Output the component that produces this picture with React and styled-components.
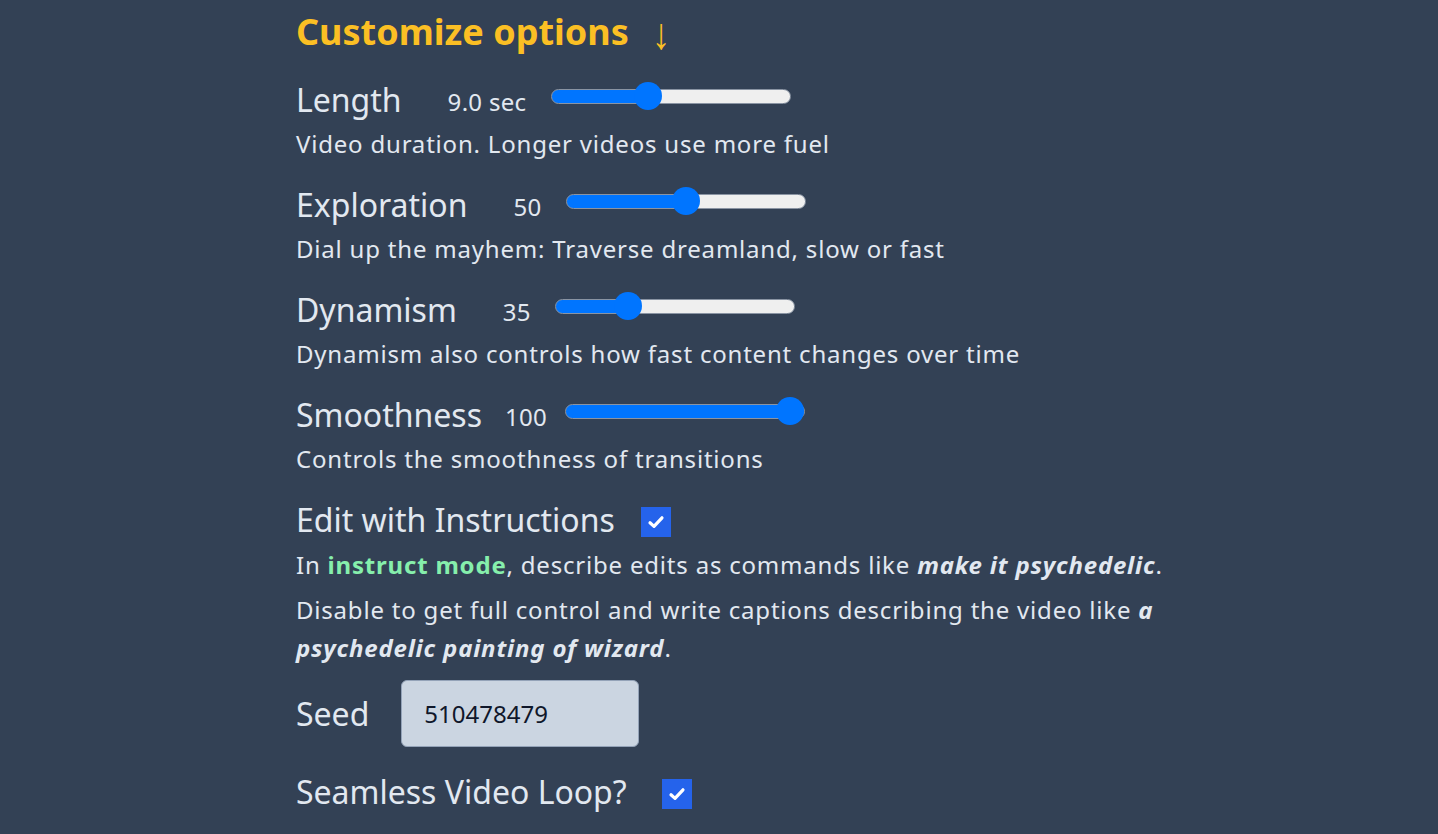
import React, { useState } from "react";
import styled, { createGlobalStyle } from "styled-components";

const GlobalStyle = createGlobalStyle`
  html, body {
    margin: 0;
    padding: 0;
    background: #334155;
  }
  body {
    font-family: "Noto Sans", "Open Sans", sans-serif;
    color: #e2e8f0;
  }
`;

const options = [
  {
    id: "length",
    label: "Length",
    min: 2,
    max: 20,
    step: 0.5,
    initial: 9,
    format: (v) => `${v.toFixed(1)} sec`,
    valueGap: 46,
    sliderGap: 25,
    desc: "Video duration. Longer videos use more fuel",
  },
  {
    id: "exploration",
    label: "Exploration",
    min: 0,
    max: 100,
    step: 1,
    initial: 50,
    format: (v) => `${v}`,
    valueGap: 46,
    sliderGap: 24,
    desc: "Dial up the mayhem: Traverse dreamland, slow or fast",
  },
  {
    id: "dynamism",
    label: "Dynamism",
    min: 10,
    max: 100,
    step: 1,
    initial: 35,
    format: (v) => `${v}`,
    valueGap: 46,
    sliderGap: 24,
    desc: "Dynamism also controls how fast content changes over time",
  },
  {
    id: "smoothness",
    label: "Smoothness",
    min: 0,
    max: 100,
    step: 1,
    initial: 100,
    format: (v) => `${v}`,
    valueGap: 23,
    sliderGap: 18,
    desc: "Controls the smoothness of transitions",
  },
];

const SliderOption = ({ option }) => {
  const [value, setValue] = useState(option.initial);
  const pct = ((value - option.min) / (option.max - option.min)) * 100;

  return (
    <Section>
      <Row>
        <Label>{option.label}</Label>
        <Value $gap={option.valueGap}>{option.format(value)}</Value>
        <Range
          type="range"
          $gap={option.sliderGap}
          min={option.min}
          max={option.max}
          step={option.step}
          value={value}
          onChange={(e) => setValue(Number(e.target.value))}
          style={{
            background: `linear-gradient(to right, #0075ff ${pct}%, #efefef ${pct}%)`,
          }}
        />
      </Row>
      <Desc>{option.desc}</Desc>
    </Section>
  );
};

const CheckBox = ({ checked, onChange }) => (
  <Box onClick={() => onChange(!checked)} $checked={checked}>
    {checked && (
      <svg width="20" height="20" viewBox="0 0 20 20">
        <path
          d="M4 10.8 L8 14.4 L16 5.8"
          fill="none"
          stroke="#fff"
          strokeWidth="3.2"
          strokeLinecap="round"
          strokeLinejoin="round"
        />
      </svg>
    )}
  </Box>
);

const App = () => {
  const [instruct, setInstruct] = useState(true);
  const [loop, setLoop] = useState(true);
  const [seed, setSeed] = useState("510478479");

  return (
    <>
      <GlobalStyle />
      <Page>
        <Title>
          Customize options <Arrow>↓</Arrow>
        </Title>

        {options.map((option) => (
          <SliderOption key={option.id} option={option} />
        ))}

        <Row>
          <Label>Edit with Instructions</Label>
          <CheckWrap $gap={26}>
            <CheckBox checked={instruct} onChange={setInstruct} />
          </CheckWrap>
        </Row>
        <Para $top={4}>
          In <Green>instruct mode</Green>, describe edits as commands like{" "}
          <Em>make it psychedelic</Em>.
        </Para>
        <Para $top={7}>
          Disable to get full control and write captions describing the video
          like <Em>a psychedelic painting of wizard</Em>.
        </Para>

        <SeedRow>
          <Label>Seed</Label>
          <SeedInput value={seed} onChange={(e) => setSeed(e.target.value)} />
        </SeedRow>

        <LoopRow>
          <Label>Seamless Video Loop?</Label>
          <CheckWrap $gap={35}>
            <CheckBox checked={loop} onChange={setLoop} />
          </CheckWrap>
        </LoopRow>
      </Page>
    </>
  );
};

const Page = styled.div`
  padding: 5px 0 20px 296px;
  width: 872px;
`;

const Title = styled.h2`
  display: flex;
  align-items: center;
  white-space: pre;
  height: 54px;
  margin: 0 0 19px;
  font-size: 36px;
  line-height: 54px;
  font-weight: 700;
  color: #fbbf24;
`;

const Arrow = styled.span`
  display: inline-block;
  margin-left: 12px;
  font-size: 44px;
  line-height: 44px;
  font-weight: 400;
  transform: scaleX(0.85);
`;

const Section = styled.div`
  margin-bottom: 17px;
`;

const Row = styled.div`
  display: flex;
  align-items: center;
  height: 44px;
`;

const Label = styled.span`
  font-size: 32px;
  line-height: 44px;
  color: #e2e8f0;
`;

const Value = styled.span`
  margin-left: ${(p) => p.$gap}px;
  font-size: 24px;
  line-height: 44px;
  padding-top: 4px;
  letter-spacing: 0.3px;
`;

const Range = styled.input`
  -webkit-appearance: none;
  appearance: none;
  margin: 0 0 0 ${(p) => p.$gap}px;
  width: 240px;
  height: 15px;
  border-radius: 8px;
  border: 1px solid #8a94a3;
  box-sizing: border-box;
  outline: none;
  position: relative;
  top: -4px;

  &::-webkit-slider-thumb {
    -webkit-appearance: none;
    appearance: none;
    width: 28px;
    height: 28px;
    border-radius: 50%;
    background: #0075ff;
    border: none;
    cursor: pointer;
  }
`;

const Desc = styled.p`
  margin: 0;
  font-size: 24px;
  line-height: 44px;
  letter-spacing: 0.8px;
`;

const CheckWrap = styled.span`
  display: inline-flex;
  margin-left: ${(p) => p.$gap}px;
  padding-top: 4px;
`;

const Box = styled.span`
  display: inline-flex;
  align-items: center;
  justify-content: center;
  width: 30px;
  height: 30px;
  background: ${(p) => (p.$checked ? "#2563eb" : "#ffffff")};
  cursor: pointer;
`;

const Para = styled.p`
  margin: ${(p) => p.$top}px 0 0;
  font-size: 24px;
  line-height: 38px;
  letter-spacing: 0.8px;
`;

const Green = styled.strong`
  color: #86efac;
  font-weight: 700;
`;

const Em = styled.em`
  font-weight: 700;
`;

const SeedRow = styled.div`
  display: flex;
  align-items: center;
  gap: 32px;
  margin-top: 13px;
`;

const SeedInput = styled.input`
  width: 238px;
  height: 67px;
  box-sizing: border-box;
  padding: 0 22px;
  border: 1px solid #94a3b8;
  border-radius: 6px;
  background: #cbd5e1;
  color: #0f172a;
  font-family: "Noto Sans", "Open Sans", sans-serif;
  font-size: 24px;
  outline: none;
`;

const LoopRow = styled(Row)`
  margin-top: 23px;
`;

export default App;
